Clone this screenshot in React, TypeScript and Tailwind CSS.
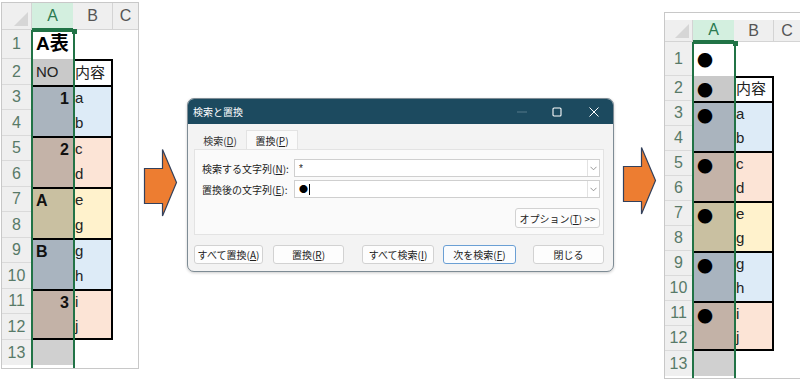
import React from "react";

const CELL_FONT = "font-['Liberation_Sans','Noto_Sans_CJK_JP',sans-serif]";

type Group = { a: string; b: [string, string]; aColor: string; bColor: string; align: "left" | "right" };

const groups: Group[] = [
  { a: "1", b: ["a", "b"], aColor: "bg-[#aab4be]", bColor: "bg-[#ddebf7]", align: "right" },
  { a: "2", b: ["c", "d"], aColor: "bg-[#c4b3a8]", bColor: "bg-[#fce4d6]", align: "right" },
  { a: "A", b: ["e", "g"], aColor: "bg-[#c9c0a1]", bColor: "bg-[#fff2cc]", align: "left" },
  { a: "B", b: ["g", "h"], aColor: "bg-[#a9b4bf]", bColor: "bg-[#ddebf7]", align: "left" },
  { a: "3", b: ["i", "j"], aColor: "bg-[#c3b2a7]", bColor: "bg-[#fce4d6]", align: "right" },
];

function RowHead({ n, last }: { n: number; last?: boolean }) {
  return (
    <div
      className={`bg-[#efefef] border-r border-[#d4d4d4] ${last ? "" : "border-b"} border-b-[#dadada] flex items-center justify-center text-[16px] text-[#587a68] font-['Liberation_Sans',sans-serif]`}
    >
      {n}
    </div>
  );
}

function Corner() {
  return (
    <div className="bg-[#efefef] border-r border-b border-[#d4d4d4] relative">
      <svg className="absolute right-[3px] bottom-[3px]" width="14" height="14" viewBox="0 0 14 14">
        <polygon points="14,0 14,14 0,14" fill="#d6d6d6" />
      </svg>
    </div>
  );
}

function ColHeads() {
  return (
    <>
      <div className="bg-[#d3efdf] border-b-2 border-[#217346] flex items-center justify-center text-[16px] text-[#2b7a50] font-['Liberation_Sans',sans-serif]">
        A
      </div>
      <div className="bg-[#efefef] border-r border-b border-[#d4d4d4] flex items-center justify-center text-[16px] text-[#555] font-['Liberation_Sans',sans-serif]">
        B
      </div>
      <div className="bg-[#efefef] border-b border-[#d4d4d4] flex items-center justify-center text-[16px] text-[#555] font-['Liberation_Sans',sans-serif]">
        C
      </div>
    </>
  );
}

function Bullet() {
  return <span className="font-['Noto_Sans_CJK_JP',sans-serif] text-[16px] leading-none text-black">●</span>;
}

function SheetBody({ bullets }: { bullets: boolean }) {
  const rows: React.ReactNode[] = [];
  rows.push(<RowHead key="r1" n={1} />);
  rows.push(
    <div key="a1" className="bg-white flex items-center pl-[4px]">
      {bullets ? <Bullet /> : <span className="text-[19px] font-bold text-black">A表</span>}
    </div>
  );
  rows.push(<div key="b1" className="bg-white" />);
  rows.push(<div key="c1" className="bg-white" />);
  rows.push(<RowHead key="r2" n={2} />);
  rows.push(
    <div key="a2" className="bg-[#c9c9c9] flex items-center pl-[4px] text-[15px] text-[#222]">
      {bullets ? <Bullet /> : "NO"}
    </div>
  );
  rows.push(
    <div key="b2" className="bg-white border-t-2 border-r-2 border-black flex items-center pl-[2px] text-[15px] text-[#222]">
      内容
    </div>
  );
  rows.push(<div key="c2" className="bg-white" />);
  return (
    <>
      {rows}
      {groups.map((g, i) => {
        const r = 3 + i * 2;
        const isLast = i === groups.length - 1;
        return (
          <React.Fragment key={i}>
            <RowHead n={r} />
            <div
              className={`${g.aColor} row-span-2 border-t-2 border-black ${isLast ? "border-b-2" : ""} flex flex-col`}
            >
              <div
                className={`h-[23px] flex items-center ${g.align === "right" && !bullets ? "justify-end pr-[4px]" : "pl-[4px]"} text-[16px] font-bold text-[#111]`}
              >
                {bullets ? <Bullet /> : g.a}
              </div>
            </div>
            <div className={`${g.bColor} border-t-2 border-r-2 border-black flex items-center pl-[2px] text-[15px] text-[#222]`}>
              {g.b[0]}
            </div>
            <div className="bg-white" />
            <RowHead n={r + 1} />
            <div
              className={`${g.bColor} border-r-2 border-black ${isLast ? "border-b-2" : ""} flex items-center pl-[2px] text-[15px] text-[#222]`}
            >
              {g.b[1]}
            </div>
            <div className="bg-white" />
          </React.Fragment>
        );
      })}
      <RowHead n={13} last />
      <div className="bg-[#d0d0d0]" />
      <div className="bg-white" />
      <div className="bg-white" />
    </>
  );
}

function LeftSheet() {
  return (
    <div className={`shrink-0 ml-[1px] mt-[2px] w-[138px] h-[367px] border border-[#c8c8c8] bg-white overflow-hidden ${CELL_FONT}`}>
      <div className="relative grid grid-cols-[30px_41px_40px_1fr] grid-rows-[27px_29px_26px_25px_26px_25px_26px_25px_26px_25px_26px_25px_26px_25px]">
        <Corner />
        <ColHeads />
        <SheetBody bullets={false} />
        <div className="absolute left-[29px] top-[27px] w-[44px] h-[400px] border-2 border-[#217346] pointer-events-none" />
        <div className="absolute left-[70px] top-[26px] w-[5px] h-[5px] bg-[#217346]" />
      </div>
    </div>
  );
}

function RightSheet() {
  return (
    <div className={`shrink-0 ml-[7px] mt-[12px] w-[137px] h-[367px] border border-[#c8c8c8] bg-white overflow-hidden pt-[7px] ${CELL_FONT}`}>
      <div className="relative grid grid-cols-[28px_41px_40px_1fr] grid-rows-[22px_34px_25px_25px_25px_25px_25px_25px_25px_25px_25px_25px_25px_25px]">
        <Corner />
        <ColHeads />
        <SheetBody bullets={true} />
        <div className="absolute left-[27px] top-[22px] w-[44px] h-[400px] border-2 border-[#217346] pointer-events-none" />
        <div className="absolute left-[68px] top-[21px] w-[5px] h-[5px] bg-[#217346]" />
      </div>
    </div>
  );
}

function Arrow({ className }: { className: string }) {
  return (
    <svg className={`shrink-0 ${className}`} width="35" height="70" viewBox="0 0 35 70">
      <polygon
        points="1.5,20.5 19.5,20.5 19.5,1.5 33.5,34.5 19.5,68 19.5,55.5 1.5,55.5"
        fill="#ed7d31"
        stroke="#33415c"
        strokeWidth="1.2"
        strokeLinejoin="miter"
      />
    </svg>
  );
}

function U({ children }: { children: React.ReactNode }) {
  return <span className="underline underline-offset-[1px]">{children}</span>;
}

function Chevron() {
  return (
    <div className="w-[12px] h-full border-l border-[#e2e2e2] flex items-center justify-center">
      <svg width="7" height="5" viewBox="0 0 7 5">
        <polyline points="0.5,0.8 3.5,3.8 6.5,0.8" fill="none" stroke="#8a8a8a" strokeWidth="0.9" />
      </svg>
    </div>
  );
}

function Btn({ children, w, primary }: { children: React.ReactNode; w: string; primary?: boolean }) {
  return (
    <div
      className={`${w} h-[19px] rounded-[3px] border ${primary ? "border-[#6a9fd4] bg-[#fafcfe]" : "border-[#d2d2d2] bg-[#fdfdfd]"} flex items-center justify-center text-[10px] text-[#222]`}
    >
      {children}
    </div>
  );
}

function Dialog() {
  return (
    <div className="shrink-0 ml-[9px] mt-[98px] w-[427px] h-[174px] rounded-[7px] border border-[#7e8c95] bg-[#f3f3f3] overflow-hidden shadow-[0_1px_3px_rgba(0,0,0,0.2)] flex flex-col font-['Noto_Sans_CJK_JP',sans-serif]">
      <div className="h-[25px] shrink-0 bg-[#1c4a5f] flex items-center pl-[5px] text-white text-[10px]">
        <span>検索と置換</span>
        <div className="ml-auto flex items-center h-full">
          <div className="w-[34px] h-full flex items-center justify-center">
            <svg width="10" height="2" viewBox="0 0 10 2">
              <line x1="0" y1="1" x2="10" y2="1" stroke="#55798a" strokeWidth="1" />
            </svg>
          </div>
          <div className="w-[36px] h-full flex items-center justify-center">
            <svg width="10" height="10" viewBox="0 0 10 10">
              <rect x="1" y="1" width="8" height="8" rx="1" fill="none" stroke="#ffffff" strokeWidth="1.1" />
            </svg>
          </div>
          <div className="w-[38px] h-full flex items-center justify-center">
            <svg width="10" height="10" viewBox="0 0 10 10">
              <line x1="0.5" y1="0.5" x2="9.5" y2="9.5" stroke="#ffffff" strokeWidth="1" />
              <line x1="9.5" y1="0.5" x2="0.5" y2="9.5" stroke="#ffffff" strokeWidth="1" />
            </svg>
          </div>
        </div>
      </div>
      <div className="pl-[6px] pr-[9px] pt-[6px]">
        <div className="flex items-end h-[19px]">
          <div className="w-[52px] h-[17px] flex items-center justify-center text-[10px] text-[#333]">
            <span>
              検索(<U>D</U>)
            </span>
          </div>
          <div className="w-[52px] h-[19px] bg-[#fafafa] border border-b-0 border-[#e3e3e3] flex items-center justify-center text-[10px] text-[#222]">
            <span>
              置換(<U>P</U>)
            </span>
          </div>
        </div>
        <div className="h-[86px] bg-[#fafafa] border border-[#e3e3e3] pl-[7px] pr-[3px] pt-[9px]">
          <div className="flex items-center h-[18px]">
            <div className="w-[92px] text-[10px] text-[#222]">
              検索する文字列(<U>N</U>):
            </div>
            <div className="flex-1 h-[18px] bg-white border border-[#cfcfcf] flex items-center">
              <span className="flex-1 pl-[4px] text-[10px] text-[#222] font-['Liberation_Sans',sans-serif]">*</span>
              <Chevron />
            </div>
          </div>
          <div className="flex items-center h-[18px] mt-[3px]">
            <div className="w-[92px] text-[10px] text-[#222]">
              置換後の文字列(<U>E</U>):
            </div>
            <div className="flex-1 h-[18px] bg-white border border-[#cfcfcf] flex items-center">
              <span className="flex-1 pl-[4px] text-[9px] text-black flex items-center">
                ●<span className="inline-block w-px h-[11px] bg-black ml-px" />
              </span>
              <Chevron />
            </div>
          </div>
          <div className="flex justify-end mt-[10px]">
            <div className="w-[85px] h-[20px] rounded-[3px] border border-[#d2d2d2] bg-[#fdfdfd] flex items-center justify-center text-[10px] text-[#222]">
              <span>
                オプション(<U>T</U>) &gt;&gt;
              </span>
            </div>
          </div>
        </div>
        <div className="flex items-center mt-[10px]">
          <Btn w="w-[74px]">
            <span>
              すべて置換(<U>A</U>)
            </span>
          </Btn>
          <div className="ml-[10px]">
            <Btn w="w-[71px]">
              <span>
                置換(<U>R</U>)
              </span>
            </Btn>
          </div>
          <div className="ml-[18px]">
            <Btn w="w-[72px]">
              <span>
                すべて検索(<U>I</U>)
              </span>
            </Btn>
          </div>
          <div className="ml-[9px]">
            <Btn w="w-[73px]" primary>
              <span>
                次を検索(<U>F</U>)
              </span>
            </Btn>
          </div>
          <div className="ml-[17px]">
            <Btn w="w-[71px]">
              <span>閉じる</span>
            </Btn>
          </div>
        </div>
      </div>
    </div>
  );
}

export default function App() {
  return (
    <div className="w-[800px] h-[380px] bg-white flex items-start overflow-hidden">
      <LeftSheet />
      <Arrow className="ml-[4px] mt-[148px]" />
      <Dialog />
      <Arrow className="ml-[8px] mt-[146px]" />
      <RightSheet />
    </div>
  );
}
